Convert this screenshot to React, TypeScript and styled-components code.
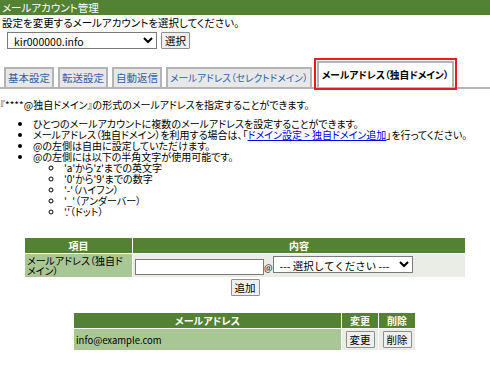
import React from "react";
import styled, { createGlobalStyle } from "styled-components";

const Global = createGlobalStyle`
  html, body { margin: 0; padding: 0; background: #fff; }
  body {
    font-family: "Noto Sans CJK JP", "Noto Sans", sans-serif;
    font-size: 10px;
    color: #000;
    font-feature-settings: "palt";
  }
`;

const Page = styled.div`
  width: 490px;
  height: 381px;
  overflow: hidden;
`;

const HeaderBar = styled.div`
  height: 15px;
  line-height: 15px;
  background: #548235;
  color: #fff;
  font-size: 10.5px;
  padding-left: 2px;
`;

const Prompt = styled.div`
  margin-top: 1px;
  padding-left: 2px;
  line-height: 14px;
  font-size: 10.5px;
`;

const SelectRow = styled.div`
  display: flex;
  align-items: center;
  gap: 4px;
  padding-left: 7px;
  margin-top: 2px;
`;

const Select = styled.select<{ $w: number }>`
  width: ${(p) => p.$w}px;
  height: 17px;
  font-family: inherit;
  font-size: 10.5px;
  border: 1px solid #7a7a7a;
  background: #fff;
  padding: 0 2px;
`;

const Button = styled.button`
  height: 17px;
  padding: 0 3px;
  font-family: inherit;
  font-size: 10.5px;
  line-height: 13px;
  background: #efefef;
  border: 1px solid #8f8f8f;
  border-radius: 1px;
  color: #000;
`;

const TabBar = styled.div`
  display: flex;
  align-items: flex-end;
  gap: 4px;
  padding-left: 4px;
  margin-top: 14px;
  border-bottom: 2px solid #b4b4b4;
  height: 24px;
`;

const Tab = styled.div<{ $active?: boolean }>`
  height: ${(p) => (p.$active ? 24 : 18)}px;
  line-height: ${(p) => (p.$active ? 24 : 18)}px;
  padding: 0 ${(p) => (p.$active ? 3 : 2)}px;
  border: 2px solid #b4b4b4;
  border-bottom: none;
  background: ${(p) => (p.$active ? "#fff" : "#e8e8e8")};
  color: ${(p) => (p.$active ? "#000" : "#2e63a8")};
  font-weight: ${(p) => (p.$active ? "bold" : "normal")};
  font-size: ${(p) => (p.$active ? 9.7 : 10.5)}px;
  outline: ${(p) => (p.$active ? "2px solid #e21d24" : "none")};
  outline-offset: 1px;
  margin-left: ${(p) => (p.$active ? 1 : 0)}px;
  white-space: nowrap;
`;

const LongTab = styled(Tab)`
  font-size: 9.7px;
`;

const Lead = styled.p`
  margin: 9px 0 0 0;
  line-height: 14px;
`;

const List = styled.ul<{ $nested?: boolean }>`
  margin: ${(p) => (p.$nested ? "0" : "6px 0 0 0")};
  padding-left: ${(p) => (p.$nested ? 31 : 33)}px;
  list-style: ${(p) => (p.$nested ? "circle" : "disc")};
  line-height: 11px;
`;

const Link = styled.a`
  color: #0000ee;
  text-decoration: underline;
`;

const Table = styled.table<{ $left: number; $w: number }>`
  margin: ${(p) => `0 0 0 ${p.$left}px`};
  width: ${(p) => p.$w}px;
  border-collapse: separate;
  border-spacing: 1px;
`;

const Th = styled.th<{ $w?: number }>`
  background: #548235;
  color: #fff;
  font-weight: bold;
  height: 15px;
  padding: 0;
  line-height: 13px;
  text-align: center;
  width: ${(p) => (p.$w ? `${p.$w}px` : "auto")};
`;

const LabelCell = styled.td`
  background: #a9c795;
  padding: 1px 1px 1px 2px;
  line-height: 10px;
  vertical-align: middle;
`;

const ContentCell = styled.td<{ $center?: boolean }>`
  background: #e9ede6;
  padding: 2px 2px;
  text-align: ${(p) => (p.$center ? "center" : "left")};
  white-space: nowrap;
`;

const EmailCell = styled.td`
  background: #a9c795;
  height: 21px;
  padding: 0 2px;
  font-size: 9.5px;
`;

const TextInput = styled.input`
  width: 129px;
  height: 16px;
  box-sizing: border-box;
  border: 1px solid #7a7a7a;
  vertical-align: middle;
`;

const At = styled.span`
  font-size: 9px;
  vertical-align: middle;
`;

const AddRow = styled.div`
  display: flex;
  justify-content: center;
  width: 490px;
  margin-top: 1px;
`;

const Spacer = styled.div<{ $h: number }>`
  height: ${(p) => p.$h}px;
`;

export default function App() {
  return (
    <Page>
      <Global />
      <HeaderBar>メールアカウント管理</HeaderBar>
      <Prompt>設定を変更するメールアカウントを選択してください。</Prompt>
      <SelectRow>
        <Select $w={150} defaultValue="kir">
          <option value="kir">kir000000.info</option>
        </Select>
        <Button>選択</Button>
      </SelectRow>
      <TabBar>
        <Tab>基本設定</Tab>
        <Tab>転送設定</Tab>
        <Tab>自動返信</Tab>
        <LongTab>メールアドレス（セレクトドメイン）</LongTab>
        <Tab $active>メールアドレス（独自ドメイン）</Tab>
      </TabBar>
      <Lead>『****@独自ドメイン』の形式のメールアドレスを指定することができます。</Lead>
      <List>
        <li>ひとつのメールアカウントに複数のメールアドレスを設定することができます。</li>
        <li>
          メールアドレス（独自ドメイン）を利用する場合は、「
          <Link href="#">ドメイン設定 &gt; 独自ドメイン追加</Link>」を行ってください。
        </li>
        <li>@の左側は自由に設定していただけます。</li>
        <li>
          @の左側には以下の半角文字が使用可能です。
          <List $nested>
            <li>'a'から'z'までの英文字</li>
            <li>'0'から'9'までの数字</li>
            <li>'-'（ハイフン）</li>
            <li>'_'（アンダーバー）</li>
            <li>'.'（ドット）</li>
          </List>
        </li>
      </List>
      <Spacer $h={20} />
      <Table $left={24} $w={442}>
        <thead>
          <tr>
            <Th $w={107}>項目</Th>
            <Th>内容</Th>
          </tr>
        </thead>
        <tbody>
          <tr>
            <LabelCell>メールアドレス（独自ドメイン）</LabelCell>
            <ContentCell>
              <TextInput type="text" />
              <At>@</At>
              <Select $w={140} defaultValue="none">
                <option value="none">--- 選択してください ---</option>
              </Select>
            </ContentCell>
          </tr>
        </tbody>
      </Table>
      <AddRow>
        <Button>追加</Button>
      </AddRow>
      <Spacer $h={16} />
      <Table $left={73} $w={343}>
        <thead>
          <tr>
            <Th>メールアドレス</Th>
            <Th $w={36}>変更</Th>
            <Th $w={36}>削除</Th>
          </tr>
        </thead>
        <tbody>
          <tr>
            <EmailCell>info@example.com</EmailCell>
            <ContentCell $center>
              <Button>変更</Button>
            </ContentCell>
            <ContentCell $center>
              <Button>削除</Button>
            </ContentCell>
          </tr>
        </tbody>
      </Table>
    </Page>
  );
}
